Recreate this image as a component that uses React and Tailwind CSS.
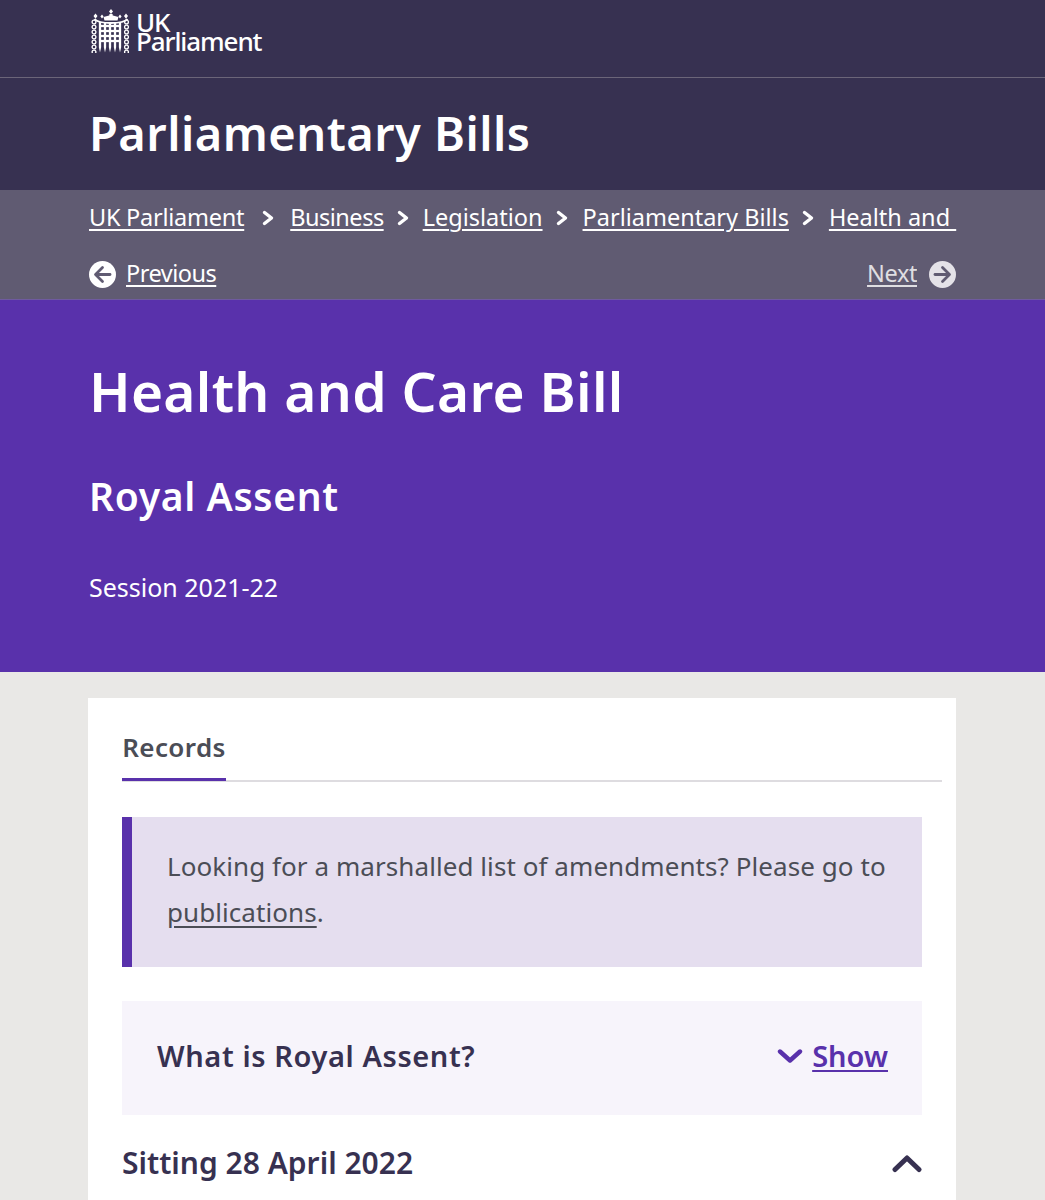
import React from "react";

const Font = '[font-family:"Noto_Sans",sans-serif]';

function Logo() {
  const bars = [8, 13, 18, 23, 28];
  const chain = [14, 19, 24, 29, 34, 39, 44, 49];
  return (
    <svg width="40" height="44" viewBox="0 0 40 44" fill="none" className="shrink-0">
      <g fill="#fff">
        <path d="M20 0l2 2.4L20 5l-2-2.6zM18.4 5h3.2v2.4h-3.2z" />
        <path d="M12.5 8l7.5-2 7.5 2-1 3.4h-13z" />
        <path d="M4.5 4.5l2 2.6-2 2.6-2-2.6zM35 4.5l2 2.6-2 2.6-2-2.6zM11 5.5l1.6 2L11 9.6 9.4 7.5zM29 5.5l1.6 2L29 9.6l-1.6-2.1z" />
      </g>
      <path d="M3.5 10c3 3.6 8.5 4 16.5 4s13.5-.4 16.5-4" stroke="#fff" strokeWidth="1.9" />
      <g stroke="#fff" strokeWidth="2.3">
        {bars.map((x) => <line key={x} x1={x + 1} y1="13" x2={x + 1} y2="38" />)}
        {[17, 22, 27, 32].map((y) => <line key={y} x1="8" y1={y} x2="30" y2={y} />)}
      </g>
      <path d="M7.8 38l1.2 5.5 1.2-5.5zM12.8 38l1.2 5.5 1.2-5.5zM17.8 38l1.2 5.5 1.2-5.5zM22.8 38l1.2 5.5 1.2-5.5zM27.8 38l1.2 5.5 1.2-5.5z" fill="#fff" />
      <g stroke="#fff" strokeWidth="1.3" fill="none">
        {chain.map((y) => (
          <g key={y}>
            <circle cx="3" cy={y - 1} r="1.9" />
            <circle cx="35.5" cy={y - 1} r="1.9" />
          </g>
        ))}
      </g>
    </svg>
  );
}

function Chevron() {
  return (
    <svg width="13" height="16" viewBox="0 0 13 16" fill="none" className="shrink-0">
      <path d="M2.5 2.5L9.5 8l-7 5.5" stroke="#fff" strokeWidth="3.4" strokeLinecap="round" strokeLinejoin="round" />
    </svg>
  );
}

function Arrow({ dir, bg, fg }) {
  return (
    <svg width="27" height="27" viewBox="0 0 27 27" className="shrink-0">
      <circle cx="13.5" cy="13.5" r="13.5" fill={bg} />
      <g stroke={fg} strokeWidth="2.8" fill="none" strokeLinecap="round" strokeLinejoin="round" transform={dir === "right" ? "rotate(180 13.5 13.5)" : undefined}>
        <path d="M13.5 6.5l-7 7 7 7" />
        <path d="M7.5 13.5H21" />
      </g>
    </svg>
  );
}

const crumb = "text-[23.5px] leading-none text-white underline underline-offset-[3px] decoration-[1.5px] whitespace-pre";

export default function App() {
  return (
    <div className={`w-[1045px] h-[1200px] overflow-hidden bg-[#e9e8e6] ${Font}`}>
      <header className="h-[78px] bg-[#373151] border-b border-b-[#6b6579] pl-[91px] pt-[9px] flex items-start gap-[5px]">
        <Logo />
        <div className="text-white text-[26px] leading-[19px] font-medium tracking-[-1.1px] pt-[4px]">
          UK<br />Parliament
        </div>
      </header>

      <div className="h-[112px] bg-[#373151] pl-[89px] pt-[27px]">
        <h1 className="text-white text-[47px] leading-[56px] font-semibold tracking-[0.47px]">Parliamentary Bills</h1>
      </div>

      <nav className="h-[110px] bg-[#605b72] border-b border-b-[#6f5aa0] px-[89px]">
        <div className="flex items-center h-[56px]">
          <a className={`${crumb} tracking-[-0.25px]`}>UK Parliament</a>
          <span className="ml-[18px] mr-[15px]"><Chevron /></span>
          <a className={`${crumb} tracking-[-0.5px]`}>Business</a>
          <span className="ml-[13px] mr-[13px]"><Chevron /></span>
          <a className={crumb}>Legislation</a>
          <span className="ml-[13px] mr-[14px]"><Chevron /></span>
          <a className={crumb}>Parliamentary Bills</a>
          <span className="ml-[13px] mr-[14px]"><Chevron /></span>
          <a className={crumb}>Health and </a>
        </div>
        <div className="flex items-center justify-between h-[54px] pt-[2px]">
          <div className="flex items-center gap-[10px]">
            <Arrow dir="left" bg="#ffffff" fg="#605b72" />
            <a className={`${crumb} tracking-[-0.5px]`}>Previous</a>
          </div>
          <div className="flex items-center gap-[12px]">
            <a className={`${crumb} opacity-80 tracking-[-0.4px]`}>Next</a>
            <Arrow dir="right" bg="#e4e2e8" fg="#605b72" />
          </div>
        </div>
      </nav>

      <section className="h-[372px] bg-[#5931ab] pl-[89px] pt-[58px] text-white">
        <h2 className="text-[55px] leading-[66px] font-semibold tracking-[0.3px]">Health and Care Bill</h2>
        <h3 className="text-[39px] leading-[46px] font-semibold mt-[49px] tracking-[0.65px]">Royal Assent</h3>
        <p className="text-[25px] leading-[32px] mt-[52px]">Session 2021-22</p>
      </section>

      <main className="ml-[88px] mr-[89px] mt-[26px] bg-white h-[520px] px-[34px]">
        <div className="relative h-[84px] border-b-2 border-b-[#dedce0] mr-[-20px]">
          <div className="absolute left-0 bottom-[-1px] h-[84px] w-[104px] border-b-[3px] border-b-[#5931ab] pt-[33px] text-center">
            <span className="text-[#4b4d56] text-[26px] leading-[36px] font-semibold block -mt-[1px] tracking-[0.4px]">Records</span>
          </div>
        </div>

        <div className="mt-[35px] h-[150px] bg-[#e5deef] border-l-[10px] border-l-[#5931ab] pl-[35px] pt-[26px] pr-[20px]">
          <p className="text-[#4b4d56] text-[26px] leading-[46px] tracking-[0.07px]">
            Looking for a marshalled list of amendments? Please go to <a className="underline underline-offset-[4px] decoration-[1.5px]">publications</a>.
          </p>
        </div>

        <div className="mt-[34px] h-[114px] bg-[#f7f4fb] pl-[35px] pr-[34px] pb-[4px] flex items-center justify-between">
          <span className="text-[#373151] text-[29px] font-semibold tracking-[0.6px]">What is Royal Assent?</span>
          <div className="flex items-center gap-[9px]">
            <svg width="26" height="18" viewBox="0 0 26 18" fill="none">
              <path d="M3 4.5l10 9 10-9" stroke="#5931ab" strokeWidth="4.4" strokeLinecap="round" strokeLinejoin="round" />
            </svg>
            <a className="text-[#5931ab] text-[29px] font-semibold underline underline-offset-[3px] decoration-2">Show</a>
          </div>
        </div>

        <div className="mt-[22px] flex items-center justify-between">
          <span className="text-[#373151] text-[30px] leading-[52px] font-semibold">Sitting 28 April 2022</span>
          <svg width="30" height="20" viewBox="0 0 30 20" fill="none">
            <path d="M3 16.5L15 5l12 11.5" stroke="#373151" strokeWidth="5" strokeLinecap="round" strokeLinejoin="round" />
          </svg>
        </div>
      </main>
    </div>
  );
}
